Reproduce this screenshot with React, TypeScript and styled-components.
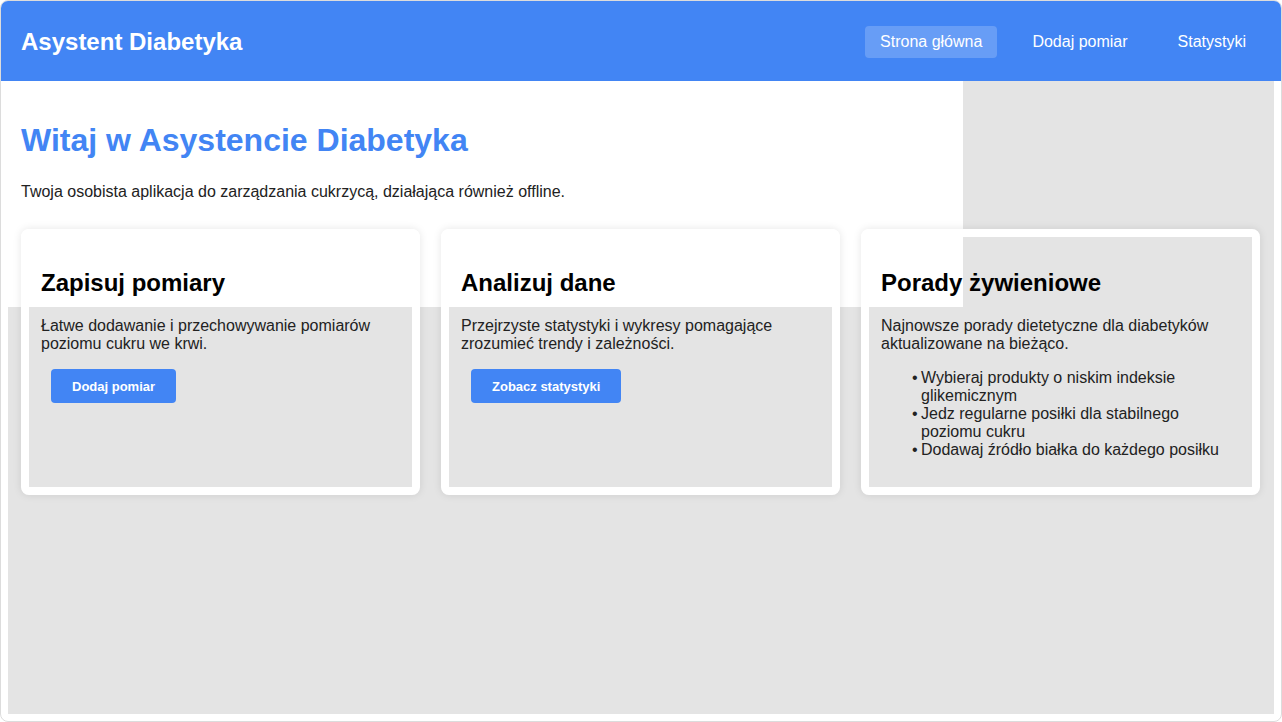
import React from "react";
import styled, { createGlobalStyle } from "styled-components";

const GlobalStyle = createGlobalStyle`
  html, body { margin: 0; padding: 0; background: #ffffff; }
  body { font-family: "Liberation Sans", Arial, sans-serif; }
  * { box-sizing: border-box; }
`;

const Frame = styled.div`
  height: 100vh;
  border: 1px solid #dcdcdc;
  border-radius: 8px;
  overflow: hidden;
  display: flex;
  flex-direction: column;
  background: #ffffff;
`;

const Header = styled.header`
  height: 80px;
  flex: none;
  background: #4285f4;
  display: flex;
  align-items: center;
  justify-content: space-between;
  padding: 2px 20px 0;
`;

const Logo = styled.div`
  color: #ffffff;
  font-size: 24px;
  font-weight: bold;
`;

const Nav = styled.nav`
  display: flex;
  gap: 20px;
`;

const NavLink = styled.a<{ $active?: boolean }>`
  color: #ffffff;
  font-size: 16px;
  padding: 7px 15px;
  border-radius: 4px;
  text-decoration: none;
  background: ${(p) => (p.$active ? "rgba(255,255,255,0.2)" : "transparent")};
`;

const Main = styled.main`
  flex: 1;
  margin: 0 7px 7px;
  background: #e4e4e4;
  display: flex;
  flex-direction: column;
`;

const Hero = styled.section`
  width: 955px;
  height: 226px;
  background: #ffffff;
  padding: 41px 13px 0;
`;

const Title = styled.h1`
  margin: 0 0 24px;
  font-size: 32px;
  font-weight: bold;
  color: #4285f4;
`;

const Lead = styled.p`
  margin: 0;
  font-size: 16px;
  line-height: 18px;
  color: #222;
`;

const CardRow = styled.div`
  display: grid;
  grid-template-columns: repeat(3, 399px);
  gap: 21px;
  margin-top: -78px;
  padding: 0 13px;
  align-items: stretch;
`;

const Card = styled.div`
  border: 8px solid #ffffff;
  border-radius: 8px;
  padding: 12px;
  box-shadow: 0 0 8px rgba(0, 0, 0, 0.1);
`;

const CardTitle = styled.h2`
  margin: 20px 0;
  font-size: 24px;
  font-weight: bold;
  color: #000;
`;

const CardText = styled.p<{ $tight?: boolean }>`
  margin: 0 0 ${(p) => (p.$tight ? "0" : "16px")};
  font-size: 16px;
  line-height: 18px;
  color: #222;
`;

const Button = styled.button`
  margin: 0 10px;
  height: 34px;
  padding: 0 21px;
  border: none;
  border-radius: 4px;
  background: #4285f4;
  color: #ffffff;
  font-family: "Liberation Sans", Arial, sans-serif;
  font-size: 13px;
  font-weight: bold;
`;

const TipList = styled.ul`
  margin: 16px 0;
  padding-left: 40px;
  font-size: 16px;
  line-height: 18px;
  color: #222;
  list-style: none;
`;

const Tip = styled.li`
  position: relative;
  &::before {
    content: "•";
    position: absolute;
    left: -9px;
  }
`;

export default function App() {
  return (
    <>
      <GlobalStyle />
      <Frame>
        <Header>
          <Logo>Asystent Diabetyka</Logo>
          <Nav>
            <NavLink $active>Strona główna</NavLink>
            <NavLink>Dodaj pomiar</NavLink>
            <NavLink>Statystyki</NavLink>
          </Nav>
        </Header>
        <Main>
          <Hero>
            <Title>Witaj w Asystencie Diabetyka</Title>
            <Lead>Twoja osobista aplikacja do zarządzania cukrzycą, działająca również offline.</Lead>
          </Hero>
          <CardRow>
            <Card>
              <CardTitle>Zapisuj pomiary</CardTitle>
              <CardText>Łatwe dodawanie i przechowywanie pomiarów poziomu cukru we krwi.</CardText>
              <Button>Dodaj pomiar</Button>
            </Card>
            <Card>
              <CardTitle>Analizuj dane</CardTitle>
              <CardText>Przejrzyste statystyki i wykresy pomagające zrozumieć trendy i zależności.</CardText>
              <Button>Zobacz statystyki</Button>
            </Card>
            <Card>
              <CardTitle>Porady żywieniowe</CardTitle>
              <CardText $tight>Najnowsze porady dietetyczne dla diabetyków aktualizowane na bieżąco.</CardText>
              <TipList>
                <Tip>Wybieraj produkty o niskim indeksie glikemicznym</Tip>
                <Tip>Jedz regularne posiłki dla stabilnego poziomu cukru</Tip>
                <Tip>Dodawaj źródło białka do każdego posiłku</Tip>
              </TipList>
            </Card>
          </CardRow>
        </Main>
      </Frame>
    </>
  );
}
